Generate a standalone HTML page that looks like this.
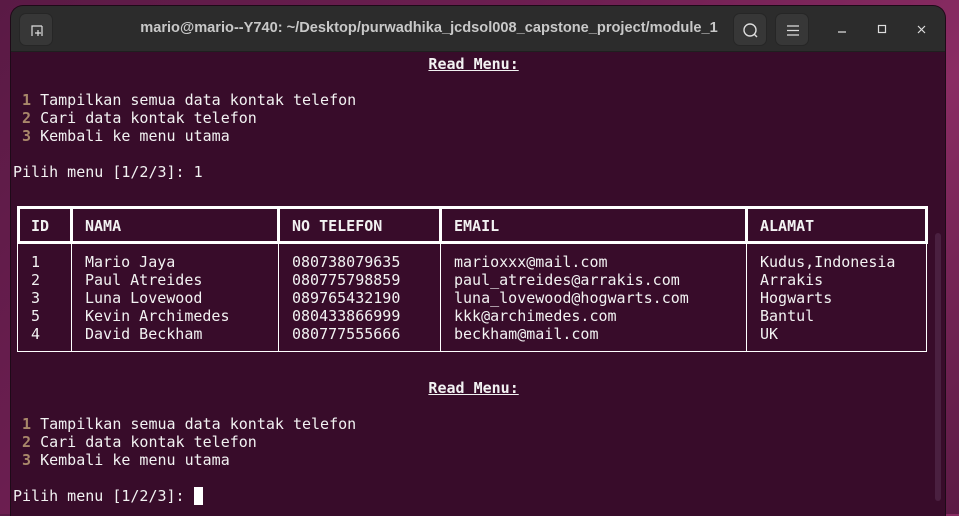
<!DOCTYPE html>
<html><head><meta charset="utf-8"><style>
*{margin:0;padding:0;box-sizing:border-box}
body{width:959px;height:514px;overflow:hidden;background:linear-gradient(135deg,#5a1a45 0%,#6e1f52 40%,#8a2c63 70%,#5b1a44 100%);position:relative;font-family:"DejaVu Sans Mono","Liberation Mono",monospace}
.win{position:absolute;left:11px;top:6px;width:934px;height:510px;background:#380c2a;border-radius:12px 12px 0 0;overflow:hidden;box-shadow:0 0 0 1px #1e0a18}
.tb{position:absolute;left:0;top:0;width:100%;height:46px;background:#2c2c2c;border-bottom:1px solid #1f1f1f}
.title{position:absolute;left:103px;width:630px;top:14px;text-align:center;color:#c8c8c8;font:bold 14.6px "Liberation Sans",sans-serif;white-space:nowrap}
.btn{position:absolute;top:7px;width:34px;height:33px;background:#373737;border-radius:7px;border:1px solid #262626}
.t{position:absolute;color:#f2f2f2;font-size:15px;line-height:18px;white-space:pre}
.n{color:#a9876a;font-weight:bold}
.b{font-weight:bold}
.u{text-decoration:underline;font-weight:bold}
.l{position:absolute;background:#fff}
</style></head><body>
<div class="win">
 <div class="tb">
  <div class="btn" style="left:8px"><svg width="34" height="33" viewBox="0 0 34 33"><path d="M12 22V12h10M18 16v6M15 19h6M22 12v10" stroke="#ddd" stroke-width="1.2" fill="none"/></svg></div>
  <div class="title">mario@mario--Y740: ~/Desktop/purwadhika_jcdsol008_capstone_project/module_1</div>
  <div class="btn" style="left:722px"><svg width="34" height="33"><circle cx="16" cy="16" r="6" stroke="#ddd" stroke-width="1.4" fill="none"/><path d="M20 20l3 3" stroke="#ddd" stroke-width="1.4"/></svg></div>
  <div class="btn" style="left:764px"><svg width="34" height="33"><path d="M11 12h12M11 16.5h12M11 21h12" stroke="#ddd" stroke-width="1.2"/></svg></div>
  <svg style="position:absolute;left:820px;top:14px" width="110" height="20"><path d="M7 12h8" stroke="#ddd" stroke-width="1.2"/><rect x="47.5" y="5.5" width="7" height="7" stroke="#ddd" stroke-width="1.2" fill="none"/><path d="M87 6l7 7M94 6l-7 7" stroke="#ddd" stroke-width="1.2"/></svg>
 </div>
 <div style="position:absolute;left:924px;top:227px;width:6px;height:268px;background:#4a2040;border-radius:3px"></div>
</div>
<div class="t" style="left:13px;top:55px">                                              <span class="u">Read Menu:</span>

 <span class="n">1</span> Tampilkan semua data kontak telefon
 <span class="n">2</span> Cari data kontak telefon
 <span class="n">3</span> Kembali ke menu utama

Pilih menu [1/2/3]: 1</div>

<div class="l" style="left:17px;top:206px;width:911px;height:3px"></div>
<div class="l" style="left:17px;top:241px;width:911px;height:3px"></div>
<div class="l" style="left:17px;top:206px;width:3px;height:38px"></div>
<div class="l" style="left:925px;top:206px;width:3px;height:38px"></div>
<div class="l" style="left:70px;top:206px;width:3px;height:38px"></div>
<div class="l" style="left:277px;top:206px;width:3px;height:38px"></div>
<div class="l" style="left:439px;top:206px;width:3px;height:38px"></div>
<div class="l" style="left:745px;top:206px;width:3px;height:38px"></div>
<div class="l" style="left:17px;top:244px;width:1px;height:108px"></div>
<div class="l" style="left:71px;top:244px;width:1px;height:108px"></div>
<div class="l" style="left:278px;top:244px;width:1px;height:108px"></div>
<div class="l" style="left:440px;top:244px;width:1px;height:108px"></div>
<div class="l" style="left:746px;top:244px;width:1px;height:108px"></div>
<div class="l" style="left:926px;top:244px;width:1px;height:108px"></div>
<div class="l" style="left:17px;top:351px;width:910px;height:1px"></div>

<div class="t b" style="left:31px;top:217px">ID</div>
<div class="t b" style="left:85px;top:217px">NAMA</div>
<div class="t b" style="left:292px;top:217px">NO TELEFON</div>
<div class="t b" style="left:454px;top:217px">EMAIL</div>
<div class="t b" style="left:760px;top:217px">ALAMAT</div>

<div class="t" style="left:31px;top:253px">1
2
3
5
4</div>
<div class="t" style="left:85px;top:253px">Mario Jaya
Paul Atreides
Luna Lovewood
Kevin Archimedes
David Beckham</div>
<div class="t" style="left:292px;top:253px">080738079635
080775798859
089765432190
080433866999
080777555666</div>
<div class="t" style="left:454px;top:253px">marioxxx@mail.com
paul_atreides@arrakis.com
luna_lovewood@hogwarts.com
kkk@archimedes.com
beckham@mail.com</div>
<div class="t" style="left:760px;top:253px">Kudus,Indonesia
Arrakis
Hogwarts
Bantul
UK</div>

<div class="t" style="left:13px;top:379px">                                              <span class="u">Read Menu:</span>

 <span class="n">1</span> Tampilkan semua data kontak telefon
 <span class="n">2</span> Cari data kontak telefon
 <span class="n">3</span> Kembali ke menu utama

Pilih menu [1/2/3]: <span style="background:#fff"> </span></div>
</body></html>
